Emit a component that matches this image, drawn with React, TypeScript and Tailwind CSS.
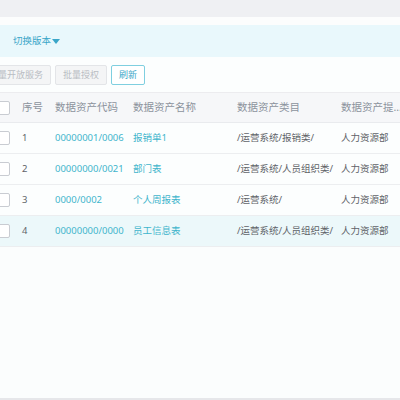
const rows = [
  { no: 1, code: "00000001/0006", name: "报销单1", cat: "/运营系统/报销类/", dept: "人力资源部" },
  { no: 2, code: "00000000/0021", name: "部门表", cat: "/运营系统/人员组织类/", dept: "人力资源部" },
  { no: 3, code: "0000/0002", name: "个人周报表", cat: "/运营系统/", dept: "人力资源部" },
  { no: 4, code: "00000000/0000", name: "员工信息表", cat: "/运营系统/人员组织类/", dept: "人力资源部" },
]

function Check() {
  return <div className="w-[14px] h-[14px] border border-[#c9ccd2] rounded-[2px] bg-white ml-[-4px] shrink-0" />
}

export default function App() {
  return (
    <div
      className="w-[400px] h-[400px] overflow-hidden bg-[#fbfdfd] flex flex-col text-[9.5px]"
      style={{ fontFamily: '"Noto Sans", "Noto Sans CJK SC", sans-serif' }}
    >
      <div className="h-[17px] bg-[#eff0f3] shrink-0" />
      <div className="h-[8px] bg-[#fcfdfd] shrink-0" />
      <div className="h-[32px] bg-[#e9f8fc] flex items-center pl-[13px] shrink-0">
        <span className="text-[#3aa6c8] flex items-center">
          切换版本
          <svg width="8" height="5" viewBox="0 0 8 5" className="ml-[1px]">
            <path d="M0 0 H8 L4 5 Z" fill="#3aa6c8" />
          </svg>
        </span>
      </div>
      <div className="h-[35px] bg-[#fcfefe] flex items-center gap-[4px] ml-[-19px] shrink-0 text-[9px]">
        <div className="h-[20px] w-[70px] shrink-0 border border-[#e3e5e8] rounded-[2px] bg-[#f4f5f6] text-[#b9bdc3] flex items-center justify-center whitespace-nowrap">
          批量开放服务
        </div>
        <div className="h-[20px] w-[52px] shrink-0 border border-[#e3e5e8] rounded-[2px] bg-[#f4f5f6] text-[#b9bdc3] flex items-center justify-center whitespace-nowrap">
          批量授权
        </div>
        <div className="h-[20px] w-[34px] shrink-0 border border-[#7fcfe0] rounded-[2px] bg-white text-[#3aa6c8] flex items-center justify-center">
          刷新
        </div>
      </div>
      <div className="h-[31px] bg-[#f6f7f9] border-t border-[#ececef] border-b border-b-[#e9ebee] flex items-center text-[#8c939d] text-[10.5px] shrink-0">
        <Check />
        <div className="ml-[12px] w-[33px] shrink-0">序号</div>
        <div className="w-[78px] shrink-0 whitespace-nowrap">数据资产代码</div>
        <div className="w-[104px] shrink-0 whitespace-nowrap">数据资产名称</div>
        <div className="w-[104px] shrink-0 whitespace-nowrap">数据资产类目</div>
        <div className="whitespace-nowrap">数据资产提…</div>
      </div>
      {rows.map((r) => (
        <div
          key={r.no}
          className={
            "h-[31px] flex items-center border-b border-[#eceef0] shrink-0 " +
            (r.no === 4 ? "bg-[#ecf8fa]" : "bg-[#fcfefe]")
          }
        >
          <Check />
          <div className="ml-[12px] w-[33px] shrink-0 text-[#5f6368]">{r.no}</div>
          <div className="w-[78px] shrink-0 text-[#3fb5cc] whitespace-nowrap">{r.code}</div>
          <div className="w-[104px] shrink-0 text-[#3fb5cc] whitespace-nowrap">{r.name}</div>
          <div className="w-[104px] shrink-0 text-[#5f6368] whitespace-nowrap">{r.cat}</div>
          <div className="text-[#5f6368] whitespace-nowrap">{r.dept}</div>
        </div>
      ))}
      <div className="flex-1" />
      <div className="h-[2px] bg-[#e6e7ea] shrink-0" />
    </div>
  )
}
